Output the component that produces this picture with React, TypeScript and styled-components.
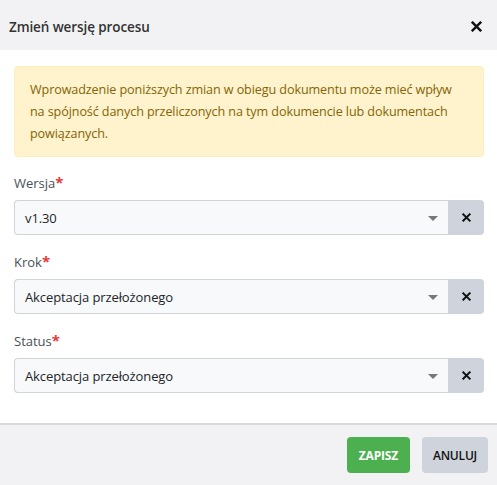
import styled, { createGlobalStyle } from "styled-components";

const GlobalStyle = createGlobalStyle`
  html, body {
    margin: 0;
    padding: 0;
    background: #fff;
  }
  body {
    font-family: "Open Sans", "Noto Sans", sans-serif;
    color: #212529;
  }
  * { box-sizing: border-box; }
`;

const Dialog = styled.div`
  width: 497px;
  height: 485px;
  display: flex;
  flex-direction: column;
  background: #fff;
`;

const Header = styled.div`
  height: 50px;
  background: #f2f2f4;
  display: flex;
  align-items: center;
  justify-content: space-between;
  padding: 3px 14px 0 9px;
`;

const Title = styled.h2`
  margin: 0;
  font-size: 13.5px;
  font-weight: 600;
  color: #333;
  letter-spacing: -0.1px;
`;

const CloseBtn = styled.button`
  border: none;
  background: none;
  padding: 0;
  width: 12px;
  height: 12px;
  display: flex;
  cursor: pointer;
`;

const Body = styled.div`
  flex: 1;
  padding: 16px 13px 0 14px;
  display: flex;
  flex-direction: column;
`;

const Alert = styled.div`
  background: #fff3cd;
  border: 1px solid #ffeeba;
  border-radius: 4px;
  color: #856404;
  font-size: 12.6px;
  line-height: 22px;
  padding: 12px 28px 11px 15px;
  margin-bottom: 17px;
  letter-spacing: -0.1px;
`;

const Field = styled.div`
  display: flex;
  flex-direction: column;
  margin-bottom: 18px;
`;

const Label = styled.label`
  font-size: 13px;
  color: #495057;
  line-height: 18px;
  margin-bottom: 8px;
`;

const Req = styled.span`
  color: #e53935;
  font-weight: 700;
  font-size: 15px;
  line-height: 10px;
`;

const InputGroup = styled.div`
  display: flex;
  height: 35px;
`;

const Select = styled.div`
  flex: 1;
  display: flex;
  align-items: center;
  justify-content: space-between;
  background: #f8f9fa;
  border: 1px solid #ced4da;
  border-right: none;
  border-radius: 4px 0 0 4px;
  padding: 0 10px 0 10px;
  font-size: 13px;
  color: #212529;
  letter-spacing: -0.1px;
`;

const Caret = styled.span`
  width: 0;
  height: 0;
  border-left: 5px solid transparent;
  border-right: 5px solid transparent;
  border-top: 5px solid #777;
  margin-top: 2px;
`;

const ClearBtn = styled.button`
  width: 36px;
  border: none;
  background: #ced3dc;
  border-radius: 0 4px 4px 0;
  display: flex;
  align-items: center;
  justify-content: center;
  padding: 0;
`;

const Footer = styled.div`
  height: 62px;
  border-top: 2px solid #d9d9d9;
  background: #f2f2f4;
  display: flex;
  align-items: center;
  justify-content: flex-end;
  gap: 12px;
  padding: 0 9px 0 0;
`;

const Button = styled.button<{ $primary?: boolean }>`
  height: 36px;
  padding: 0 ${(p) => (p.$primary ? "12px" : "11px")};
  border: none;
  border-radius: 4px;
  font-family: "Open Sans", "Noto Sans", sans-serif;
  font-size: 12px;
  font-weight: ${(p) => (p.$primary ? 700 : 600)};
  text-transform: uppercase;
  letter-spacing: -0.2px;
  background: ${(p) => (p.$primary ? "#4caf50" : "#ced3dc")};
  color: ${(p) => (p.$primary ? "#fff" : "#111")};
  cursor: pointer;
`;

const XIcon = ({ size }: { size: number }) => (
  <svg width={size} height={size} viewBox="0 0 10 10">
    <path d="M1.5 1.5 L8.5 8.5 M8.5 1.5 L1.5 8.5" stroke="#111" strokeWidth="2.2" strokeLinecap="square" />
  </svg>
);

const fields = [
  { label: "Wersja", value: "v1.30" },
  { label: "Krok", value: "Akceptacja przełożonego" },
  { label: "Status", value: "Akceptacja przełożonego" },
];

export default function App() {
  return (
    <>
      <GlobalStyle />
      <Dialog>
        <Header>
          <Title>Zmień wersję procesu</Title>
          <CloseBtn aria-label="Zamknij">
            <XIcon size={11} />
          </CloseBtn>
        </Header>
        <Body>
          <Alert>
            Wprowadzenie poniższych zmian w obiegu dokumentu może mieć wpływ na spójność danych
            przeliczonych na tym dokumencie lub dokumentach powiązanych.
          </Alert>
          {fields.map((f) => (
            <Field key={f.label}>
              <Label>
                {f.label}
                <Req>*</Req>
              </Label>
              <InputGroup>
                <Select>
                  <span>{f.value}</span>
                  <Caret />
                </Select>
                <ClearBtn aria-label="Wyczyść">
                  <XIcon size={9} />
                </ClearBtn>
              </InputGroup>
            </Field>
          ))}
        </Body>
        <Footer>
          <Button $primary>Zapisz</Button>
          <Button>Anuluj</Button>
        </Footer>
      </Dialog>
    </>
  );
}
